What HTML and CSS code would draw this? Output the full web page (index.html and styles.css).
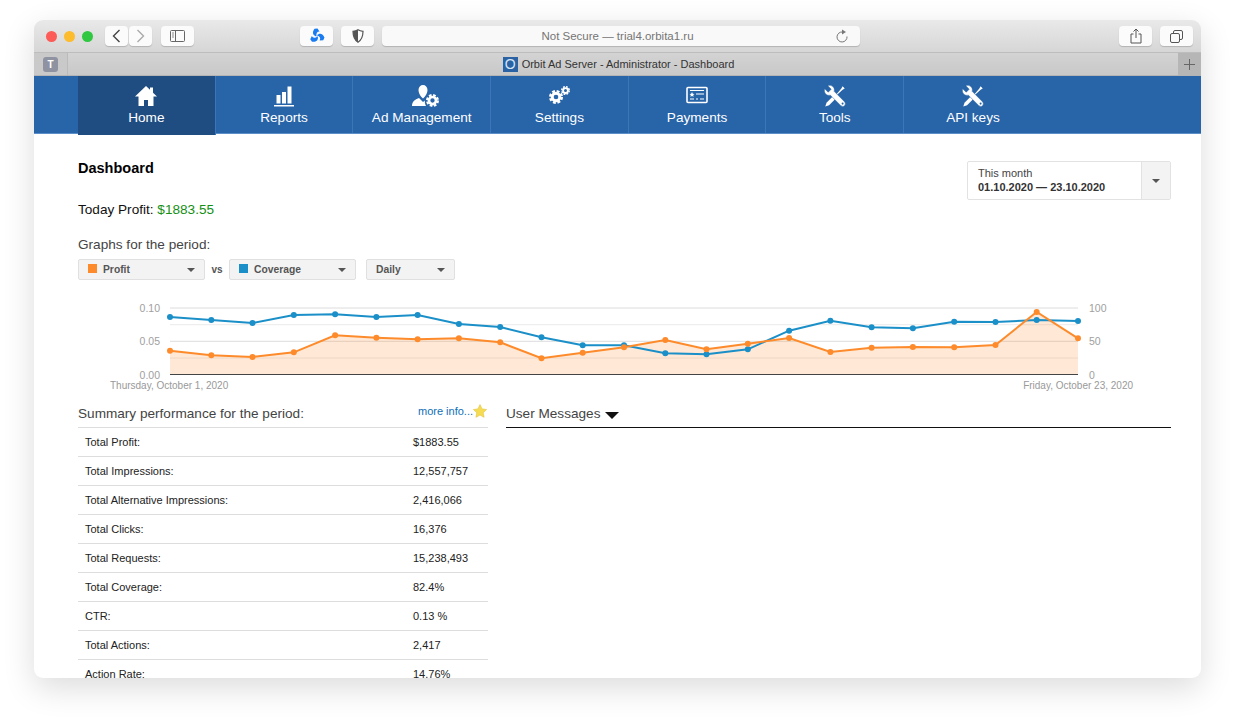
FILE: index.html
```html
<!DOCTYPE html>
<html lang="en">

<head>
    <meta charset="UTF-8">
    <title>Orbit Ad Server - Administrator - Dashboard</title>
    <link rel="stylesheet" href="styles.css">
</head>

<body>
    <svg class="defs" width="0" height="0">
        <symbol id="gear" viewBox="0 0 24 24">
            <circle cx="12" cy="12" r="6.5" fill="none" stroke="#fff" stroke-width="5"></circle>
            <circle cx="12" cy="12" r="10" fill="none" stroke="#fff" stroke-width="4" stroke-dasharray="4.85 3"></circle>
        </symbol>
        <symbol id="tools" viewBox="0 0 26 26">
            <path fill="#fff" d="M15 10.500L20.500 4l1.500-2.500 2.500 2.500L22 5.500l-6.500 6z"></path>
            <path fill="#fff" d="M11.500 12.500L3 21 1.500 25.500 6 24l8.500-8.500z"></path>
            <path fill="#fff" stroke="#2864a8" stroke-width=".6" d="M.8 4.500L5 8.500 8.500 5 4.500.8C8.500-.8 13.500 3 12 7.500L24.500 20Q26 22 24.500 24.300T20 24.500L7.500 12C3 13.500-.8 8.500.8 4.500z"></path>
            <circle cx="22" cy="22" r="1.200" fill="#2864a8"></circle>
        </symbol>
        <marker id="dotOrange" markerUnits="userSpaceOnUse" markerWidth="8" markerHeight="8" refX="4" refY="4">
            <circle cx="4" cy="4" r="3" fill="#fd8b2c"></circle>
        </marker>
        <marker id="dotBlue" markerUnits="userSpaceOnUse" markerWidth="8" markerHeight="8" refX="4" refY="4">
            <circle cx="4" cy="4" r="3" fill="#1b8fc8"></circle>
        </marker>
    </svg>

    <div class="window">
        <div class="toolbar">
            <div class="lights">
                <span class="light red"></span>
                <span class="light yellow"></span>
                <span class="light green"></span>
            </div>
            <div class="nav-buttons">
                <span class="tool-btn back">
                    <svg width="9" height="14" viewBox="0 0 9 14"><path d="M7.500 1L1.500 7l6 6" fill="none" stroke="#444" stroke-width="1.400"></path></svg>
                </span>
                <span class="tool-btn back">
                    <svg width="9" height="14" viewBox="0 0 9 14"><path d="M1.500 1l6 6-6 6" fill="none" stroke="#aaa" stroke-width="1.400"></path></svg>
                </span>
            </div>
            <span class="tool-btn wide sidebar-btn">
                <svg width="15" height="12" viewBox="0 0 15 12"><rect x=".5" y=".5" width="14" height="11" rx="1" fill="none" stroke="#666"></rect><path d="M5.500 1v10" stroke="#666"></path><path d="M2 3h2M2 5h2M2 7h2" stroke="#888"></path></svg>
            </span>
            <span class="tool-btn wide swirl-btn">
                <svg width="16" height="16" viewBox="0 0 16 16">
                    <path fill="#1a7cf0" d="M7.500 8.500C3.500 7.500 3 4 5.500 .8L8.500 .5 10.500 3.500C8 3.500 7 5 7.500 8.500z"></path>
                    <path fill="#1a7cf0" d="M7.500 8.500C3.500 7.500 3 4 5.500 .8L8.500 .5 10.500 3.500C8 3.500 7 5 7.500 8.500z" transform="rotate(120 8 8)"></path>
                    <path fill="#1a7cf0" d="M7.500 8.500C3.500 7.500 3 4 5.500 .8L8.500 .5 10.500 3.500C8 3.500 7 5 7.500 8.500z" transform="rotate(240 8 8)"></path>
                </svg>
            </span>
            <span class="tool-btn wide shield-btn">
                <svg width="12" height="14" viewBox="0 0 12 14"><path d="M6 .8C4.500 1.800 2.800 2.200 1 2.300 1 7.500 2.500 11 6 13.200 9.500 11 11 7.500 11 2.300 9.200 2.200 7.500 1.800 6 .8z" fill="none" stroke="#555" stroke-width="1.200"></path><path d="M6 .8C4.500 1.800 2.800 2.200 1 2.300 1 7.500 2.500 11 6 13.200z" fill="#555"></path></svg>
            </span>
            <div class="address">
                <span class="address-text">Not Secure — trial4.orbita1.ru</span>
                <svg class="reload" width="14" height="14" viewBox="0 0 14 14"><path d="M7.500 3A5 5 0 1 0 12 7.500" fill="none" stroke="#777" stroke-width="1"></path><path d="M7 .5L11 3 7 5.500z" fill="#777"></path></svg>
            </div>
            <span class="tool-btn wide share-btn">
                <svg width="12" height="16" viewBox="0 0 12 16"><path d="M3.500 6H1v9h10V6H8.500" fill="none" stroke="#555"></path><path d="M6 10V1M3.500 3.500L6 1l2.500 2.500" fill="none" stroke="#555"></path></svg>
            </span>
            <span class="tool-btn wide tabs-btn">
                <svg width="13" height="13" viewBox="0 0 13 13"><rect x=".5" y="3.500" width="9" height="9" rx="1.500" fill="none" stroke="#555"></rect><path d="M3.500 3.500V2A1.500 1.500 0 0 1 5 .5h6A1.500 1.500 0 0 1 12.500 2v6A1.500 1.500 0 0 1 11 9.500H9.500" fill="none" stroke="#555"></path></svg>
            </span>
        </div>

        <div class="tabbar">
            <div class="pinned"><span class="pinned-icon">T</span></div>
            <div class="tab-title"><span class="favicon">O</span>Orbit Ad Server - Administrator - Dashboard</div>
            <div class="new-tab">
                <svg width="11" height="11" viewBox="0 0 11 11"><path d="M5.500 0v11M0 5.500h11" stroke="#666"></path></svg>
            </div>
        </div>

        <ul class="menu">
            <li class="menu-item active">
                <svg class="menu-icon" width="24" height="22" viewBox="0 0 24 22"><path fill="#fff" d="M12 1L1 11.500h3.500V21H10v-6h4v6h5.500v-9.500H23l-4-3.800V2.500h-3V4.800z"></path></svg>
                Home
            </li>
            <li class="menu-item">
                <svg class="menu-icon" width="24" height="22" viewBox="0 0 24 22"><path fill="#fff" d="M4.500 10h4v8.500h-4zM10 7h4v11.500h-4zM15.500 1.500h4v17h-4zM2 20h20v1.500H2z"></path></svg>
                Reports
            </li>
            <li class="menu-item">
                <svg class="menu-icon" width="34" height="22" viewBox="0 0 34 22">
                    <path fill="#fff" d="M18 0C15.500 0 13.500 2 13.500 5 13.500 8.500 16 12 18 13.500 20 12 22.500 8.500 22.500 5 22.500 2 20.500 0 18 0zM14 13C11 14.500 7 15.500 7 21H21C20 19 19.500 17 20 15.500L18 17z"></path>
                    <use href="#gear" x="21" y="9" width="13" height="13"></use>
                </svg>
                Ad Management
            </li>
            <li class="menu-item">
                <svg class="menu-icon" width="24" height="22" viewBox="0 0 24 22">
                    <use href="#gear" x="2" y="5" width="14" height="14"></use>
                    <use href="#gear" x="14" y="1" width="9" height="9"></use>
                </svg>
                Settings
            </li>
            <li class="menu-item">
                <svg class="menu-icon" width="24" height="22" viewBox="0 0 24 22"><rect x="2" y="2.500" width="20" height="15" rx="1" fill="none" stroke="#fff" stroke-width="1.600"></rect><path d="M5 5.500h14" stroke="#fff"></path><path fill="#fff" d="M7 7l.8 1.700 1.700.2-1.300 1.100.4 1.800L7 10.900l-1.600.9.400-1.800-1.300-1.100 1.700-.2z"></path><path d="M11 9h8M5 14h4M11 14h2M15 14h4" stroke="#fff" stroke-width="1.200"></path></svg>
                Payments
            </li>
            <li class="menu-item">
                <svg class="menu-icon" width="24" height="22" viewBox="0 0 26 26"><use href="#tools"></use></svg>
                Tools
            </li>
            <li class="menu-item last">
                <svg class="menu-icon" width="24" height="22" viewBox="0 0 26 26"><use href="#tools"></use></svg>
                API keys
            </li>
        </ul>

        <div class="content">
            <div class="top-row">
                <div>
                    <h1 class="page-title">Dashboard</h1>
                    <p class="today">Today Profit: <span class="money">$1883.55</span></p>
                </div>
                <div class="date-picker">
                    <div class="date-text">
                        <div>This month</div>
                        <div class="date-range">01.10.2020 — 23.10.2020</div>
                    </div>
                    <div class="date-arrow"><span class="caret"></span></div>
                </div>
            </div>

            <p class="graphs-label">Graphs for the period:</p>
            <div class="selects">
                <div class="select"><span class="swatch orange"></span><span class="select-text">Profit</span><span class="caret"></span></div>
                <span class="vs">vs</span>
                <div class="select"><span class="swatch blue"></span><span class="select-text">Coverage</span><span class="caret"></span></div>
                <div class="select daily"><span class="select-text">Daily</span><span class="caret"></span></div>
            </div>

            <svg class="chart" width="1093" height="96" viewBox="78 298 1093 96">
                <path class="grid" d="M170 308H1078M170 341.300H1078"></path>
                <path class="grid light" d="M170 324.700H1078M170 358H1078"></path>
                <path class="area" d="M170 374.500V350.700L211.300 355.300 252.500 357 293.800 352.300 335.100 335.300 376.400 337.700 417.600 339.300 458.900 338.300 500.200 342.300 541.500 358.300 582.700 352.700 624 347.300 665.300 340 706.500 349.300 747.800 343.700 789.100 338 830.400 352 871.600 347.700 912.900 347 954.200 347.300 995.500 345 1036.700 312 1078 338.300V374.500z"></path>
                <path class="baseline" d="M170 374.500H1078"></path>
                <polyline class="line-blue" points="170,317 211.300,320 252.500,323 293.800,315 335.100,314.300 376.400,317 417.600,315 458.900,324 500.200,327 541.500,337.300 582.700,345.300 624,345.300 665.300,353.300 706.500,354.300 747.800,349.300 789.100,330.700 830.400,320.700 871.600,327.300 912.900,328.300 954.200,321.700 995.500,322 1036.700,320 1078,321"></polyline>
                <polyline class="line-orange" points="170,350.700 211.300,355.300 252.500,357 293.800,352.300 335.100,335.300 376.400,337.700 417.600,339.300 458.900,338.300 500.200,342.300 541.500,358.300 582.700,352.700 624,347.300 665.300,340 706.500,349.300 747.800,343.700 789.100,338 830.400,352 871.600,347.700 912.900,347 954.200,347.300 995.500,345 1036.700,312 1078,338.300"></polyline>
                <text class="tick" x="160" y="312" text-anchor="end">0.10</text>
                <text class="tick" x="160" y="345" text-anchor="end">0.05</text>
                <text class="tick" x="160" y="379" text-anchor="end">0.00</text>
                <text class="tick" x="1089" y="312">100</text>
                <text class="tick" x="1089" y="345">50</text>
                <text class="tick" x="1089" y="379">0</text>
                <text class="tick date" x="110" y="389">Thursday, October 1, 2020</text>
                <text class="tick date" x="1133" y="389" text-anchor="end">Friday, October 23, 2020</text>
            </svg>

            <div class="columns">
                <div class="summary">
                    <div class="summary-head">
                        <span class="section-title">Summary performance for the period:</span>
                        <a class="more" href="#">more info...<svg class="star" width="14" height="14" viewBox="0 0 14 14"><path fill="#f6dc52" stroke="#e3c23c" stroke-width=".6" d="M7 .6l2 4.300 4.600.6-3.400 3.200.9 4.600L7 11.100l-4.100 2.200.9-4.600L.4 5.500 5 4.900z"></path></svg></a>
                    </div>
                    <table class="stats">
                        <tr><td>Total Profit:</td><td>$1883.55</td></tr>
                        <tr><td>Total Impressions:</td><td>12,557,757</td></tr>
                        <tr><td>Total Alternative Impressions:</td><td>2,416,066</td></tr>
                        <tr><td>Total Clicks:</td><td>16,376</td></tr>
                        <tr><td>Total Requests:</td><td>15,238,493</td></tr>
                        <tr><td>Total Coverage:</td><td>82.4%</td></tr>
                        <tr><td>CTR:</td><td>0.13 %</td></tr>
                        <tr><td>Total Actions:</td><td>2,417</td></tr>
                        <tr><td>Action Rate:</td><td>14.76%</td></tr>
                    </table>
                </div>
                <div class="messages">
                    <div class="messages-head"><span class="section-title">User Messages</span><span class="big-caret"></span></div>
                </div>
            </div>
        </div>
    </div>
</body>

</html>
```

FILE: styles.css
```css
html, body {
    margin: 0;
    height: 724px;
    overflow: hidden;
    background: #fff;
    font-family: "Liberation Sans", Arial, sans-serif;
}

.defs {
    display: block;
    height: 0;
}

.window {
    width: 1167px;
    height: 658px;
    margin: 20px 0 0 34px;
    border-radius: 9px;
    overflow: hidden;
    background: #fff;
    box-shadow: 0 10px 32px rgba(0, 0, 0, .14);
}

/* Browser chrome */

.toolbar {
    display: flex;
    align-items: center;
    height: 32px;
    background: linear-gradient(#e9e9e9, #d6d6d6);
    border-bottom: 1px solid #bdbdbd;
}

.lights {
    display: flex;
    gap: 7px;
    margin-left: 12px;
    width: 59px;
}

.light {
    width: 11px;
    height: 11px;
    border-radius: 50%;
}

.red { background: #fc5b57; }
.yellow { background: #fdbb2e; }
.green { background: #2fc840; }

.nav-buttons {
    display: flex;
    gap: 1px;
}

.tool-btn {
    display: flex;
    align-items: center;
    justify-content: center;
    width: 23px;
    height: 20px;
    border-radius: 4px;
    background: #fbfbfb;
    box-shadow: 0 1px 1px rgba(0, 0, 0, .18);
}

.wide {
    width: 33px;
}

.sidebar-btn { margin-left: 9px; }
.swirl-btn { margin-left: 106px; }
.shield-btn { margin-left: 8px; }
.tabs-btn { margin-left: 8px; }
.share-btn { margin-left: 259px; }

.address {
    position: relative;
    width: 478px;
    height: 20px;
    margin-left: 8px;
    padding-right: 7px;
    box-sizing: border-box;
    border-radius: 4px;
    background: #f9f9f9;
    box-shadow: 0 1px 1px rgba(0, 0, 0, .18);
    text-align: center;
    font-size: 11.500px;
    line-height: 21px;
    color: #757575;
}

.reload {
    position: absolute;
    right: 11px;
    top: 3px;
}

.tabbar {
    display: flex;
    align-items: center;
    height: 22px;
    background: linear-gradient(#d3d3d3, #c8c8c8);
    border-bottom: 1px solid #b4b4b4;
    font-size: 11px;
    color: #333;
}

.pinned {
    display: flex;
    align-items: center;
    justify-content: center;
    width: 33px;
    height: 22px;
    border-right: 1px solid #bbb;
    background: #c9c9c9;
}

.pinned-icon {
    width: 15px;
    height: 15px;
    border-radius: 3px;
    background: #8f92a0;
    color: #fff;
    font-size: 10px;
    font-weight: bold;
    line-height: 15px;
    text-align: center;
}

.tab-title {
    flex: 1;
    display: flex;
    align-items: center;
    justify-content: center;
    padding-right: 9px;
}

.favicon {
    width: 15px;
    height: 15px;
    margin-right: 4px;
    background: #2a62a4;
    color: #d5e4f5;
    font-size: 14px;
    line-height: 15px;
    text-align: center;
}

.new-tab {
    display: flex;
    align-items: center;
    justify-content: center;
    width: 23px;
    height: 22px;
    background: #b6b6b6;
}

/* Main menu */

.menu {
    display: flex;
    height: 57px;
    margin: 0;
    padding: 0 0 0 44px;
    list-style: none;
    background: #2864a8;
    border-bottom: 1px solid #5c8fc9;
}

.menu-item {
    display: flex;
    flex-direction: column;
    align-items: center;
    flex: 0 0 137.700px;
    height: 57px;
    padding-top: 9px;
    box-sizing: border-box;
    border-right: 1px solid #3b76b9;
    color: #fff;
    font-size: 13.600px;
    line-height: 16px;
}

.menu-item.last {
    border-right: 0;
}

.menu-item.active {
    height: 59px;
    background: #1f4d82;
}

.menu-icon {
    display: block;
    height: 22px;
    margin-bottom: 3px;
}

/* Page content */

.content {
    padding: 26px 30px 0 44px;
}

.top-row {
    display: flex;
    justify-content: space-between;
    align-items: flex-start;
    height: 77px;
}

.page-title {
    margin: 0;
    font-size: 14.500px;
    line-height: 16px;
    color: #000;
}

.today {
    margin: 26px 0 0;
    font-size: 13.600px;
    line-height: 16px;
    color: #111;
}

.money {
    color: #159015;
}

.date-picker {
    display: flex;
    width: 204px;
    height: 39px;
    margin-top: 1px;
    box-sizing: border-box;
    border: 1px solid #e2e2e2;
    border-radius: 2px;
    font-size: 11px;
    line-height: 14px;
    color: #444;
}

.date-text {
    flex: 1;
    padding: 4px 0 0 10px;
}

.date-range {
    font-weight: bold;
    color: #333;
}

.date-arrow {
    display: flex;
    align-items: center;
    justify-content: center;
    width: 28px;
    background: #f3f3f3;
    border-left: 1px solid #e2e2e2;
}

.caret {
    width: 0;
    height: 0;
    border-left: 4px solid transparent;
    border-right: 4px solid transparent;
    border-top: 4px solid #555;
}

.graphs-label {
    margin: 0;
    font-size: 13.600px;
    line-height: 16px;
    color: #444;
}

.selects {
    display: flex;
    align-items: center;
    margin-top: 6px;
    font-size: 10.300px;
    font-weight: bold;
    color: #555;
}

.select {
    display: flex;
    align-items: center;
    width: 127px;
    height: 21px;
    padding: 0 9px;
    box-sizing: border-box;
    background: #f3f3f3;
    border: 1px solid #e0e0e0;
    border-radius: 2px;
}

.select.daily {
    width: 89px;
    margin-left: 10px;
}

.select-text {
    flex: 1;
}

.swatch {
    width: 9px;
    height: 9px;
    margin-right: 6px;
    margin-bottom: 2px;
}

.swatch.orange { background: #fd8b2c; }
.swatch.blue { background: #1b8fc8; }

.vs {
    width: 24px;
    text-align: center;
    font-size: 10px;
}

/* Chart */

.chart {
    display: block;
    margin-top: 18px;
}

.grid {
    fill: none;
    stroke: #dcdcdc;
    stroke-width: 1;
}

.grid.light {
    stroke: #eaeaea;
}

.baseline {
    fill: none;
    stroke: #444;
    stroke-width: 1;
}

.area {
    fill: #fd8b2c;
    fill-opacity: .2;
}

.line-orange,
.line-blue {
    fill: none;
    stroke-width: 2;
}

.line-orange {
    stroke: #fd8b2c;
    marker: url(#dotOrange);
}

.line-blue {
    stroke: #1b8fc8;
    marker: url(#dotBlue);
}

.tick {
    font-size: 10.500px;
    fill: #a0a0a0;
}

.tick.date {
    font-size: 10px;
    fill: #999;
}

/* Summary and messages */

.columns {
    display: flex;
    gap: 18px;
}

.summary {
    width: 410px;
}

.summary-head {
    display: flex;
    justify-content: space-between;
    height: 34px;
    box-sizing: border-box;
    padding-top: 12px;
    border-bottom: 1px solid #ddd;
}

.section-title {
    font-size: 13.600px;
    line-height: 16px;
    color: #444;
}

.more {
    display: flex;
    align-items: flex-start;
    margin-top: -2px;
    margin-right: 1px;
    font-size: 11px;
    line-height: 14px;
    color: #0f6fb8;
    text-decoration: none;
}

.stats {
    width: 100%;
    border-collapse: separate;
    border-spacing: 0;
    font-size: 11px;
    color: #222;
}

.stats td {
    height: 29px;
    padding: 0 0 0 7px;
    box-sizing: border-box;
    border-bottom: 1px solid #ddd;
}

.stats td:first-child {
    width: 328px;
}

.messages {
    flex: 1;
}

.messages-head {
    display: flex;
    height: 34px;
    box-sizing: border-box;
    padding-top: 12px;
    border-bottom: 1px solid #111;
}

.big-caret {
    width: 0;
    height: 0;
    margin: 6px 0 0 5px;
    border-left: 7px solid transparent;
    border-right: 7px solid transparent;
    border-top: 7px solid #111;
}
```
